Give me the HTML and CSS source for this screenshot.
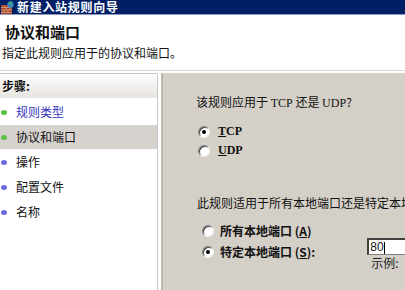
FILE: index.html
```html
<!DOCTYPE html>
<html lang="zh-CN">
<head>
  <meta charset="UTF-8" />
  <title>新建入站规则向导</title>
  <link rel="stylesheet" href="styles.css">
</head>
<body>
  <div class="titlebar">
    <svg class="app-icon" width="13" height="13" viewBox="0 0 13 13">
      <rect x="0" y="4" width="11" height="9" fill="#a0472a"/>
      <path d="M0 6.5h11M0 9h11M0 11.5h11M3 4v2.5M7 4v2.5M5 6.5v2.5M9 6.5v2.5M3 9v2.5M7 9v2.5" stroke="#e0a080" stroke-width="0.8"/>
      <circle cx="9.5" cy="3.5" r="3.2" fill="#2a7fd0"/>
      <path d="M7.6 2.2c1 .2 1.4 1 2.2 1.2.6.2.6 1.3 1.4 1.6M9 .5c.3 .8 1.2 1 1.8 .8" stroke="#5cc040" stroke-width="1.1" fill="none"/>
    </svg>
    <span class="title-text">新建入站规则向导</span>
  </div>

  <div class="page-head">
    <h1>协议和端口</h1>
    <p>指定此规则应用于的协议和端口。</p>
  </div>

  <div class="main">
    <div class="steps">
      <div class="steps-head">步骤:</div>
      <ul class="step-list">
        <li class="done"><span class="dot green"></span><a>规则类型</a></li>
        <li class="current"><span class="dot green"></span>协议和端口</li>
        <li><span class="dot"></span>操作</li>
        <li><span class="dot"></span>配置文件</li>
        <li><span class="dot"></span>名称</li>
      </ul>
    </div>

    <div class="content">
      <p class="question">该规则应用于 <span class="mono">TCP</span> 还是 <span class="mono">UDP</span>?</p>
      <label class="radio"><span class="rb checked"></span><b class="mono"><u>T</u>CP</b></label>
      <label class="radio"><span class="rb"></span><b class="mono"><u>U</u>DP</b></label>

      <p class="question second">此规则适用于所有本地端口还是特定本地端口?</p>
      <label class="radio port"><span class="rb"></span><b>所有本地端口 (<u>A</u>)</b></label>
      <div class="port-row">
        <label class="radio port"><span class="rb checked"></span><b>特定本地端口 (<u>S</u>):</b></label>
        <div class="port-box">
          <div class="textbox">80<span class="caret"></span></div>
          <div class="example">示例:</div>
        </div>
      </div>
    </div>
  </div>
</body>
</html>
```

FILE: styles.css
```css
body { margin: 0; width: 405px; height: 290px; overflow: hidden; background: #fff; font-family: "Noto Sans CJK SC", "DejaVu Sans", sans-serif; font-size: 12px; color: #111; }

.titlebar { height: 14px; background: #011f66; border-bottom: 1px solid #8d9bc4; display: flex; align-items: center; gap: 3px; padding-left: 1px; overflow: hidden; }
.app-icon { flex: none; }
.title-text { color: #fff; font-weight: bold; font-size: 12px; letter-spacing: 0.7px; line-height: 14px; }

.page-head { height: 55px; border-bottom: 1px solid #d8d8d8; }
.page-head h1 { margin: 0; padding: 8px 0 0 5px; font-size: 15px; line-height: 18px; font-weight: bold; }
.page-head p { margin: 0; padding: 4px 0 0 2px; font-size: 12px; line-height: 16px; }

.main { display: flex; height: 219px; padding-top: 2px; }

.steps { width: 157px; border: 1px solid #c8c8c8; border-left: none; background: #fff; }
.steps-head { height: 24px; line-height: 24px; padding-left: 2px; font-weight: bold; background: linear-gradient(#ffffff, #e6e3df); }
.step-list { list-style: none; margin: 0; padding: 2px 0 0; }
.step-list li { height: 24px; line-height: 24px; display: flex; align-items: center; gap: 9px; margin-bottom: 1px; }
.step-list li.current { background: #d6d3ce; }
.step-list a { color: #3333bb; }
.dot { width: 6px; height: 5px; border-radius: 50%; background: #6a6ad8; margin-left: 1px; }
.dot.green { background: #58c040; }

.content { flex: 1; margin-left: 3px; border-left: 2px solid #bbb8b0; background: #d4d0c8; padding: 21px 0 0 33px; white-space: nowrap; overflow: hidden; }
.question { margin: 0 0 11px; line-height: 16px; }
.question.second { margin: 35px 0 9px 1px; }
.mono { font-family: "Liberation Serif", serif; }
.radio { display: flex; align-items: center; gap: 8px; height: 19px; padding-left: 2px; }
.radio b { font-weight: bold; }
.radio.port { padding-left: 6px; gap: 6px; height: 21px; }
.rb { width: 10px; height: 10px; border-radius: 50%; background: #fff; border: 1px solid #808080; border-right-color: #eee; border-bottom-color: #eee; box-shadow: inset 1px 1px 0 #404040; position: relative; }
.rb.checked::after { content: ""; position: absolute; left: 3px; top: 3px; width: 4px; height: 4px; border-radius: 50%; background: #000; }

.port-row { display: flex; align-items: flex-start; }
.port-box { margin-left: 52px; margin-top: -3px; }
.textbox { width: 40px; height: 14px; background: #fff; border: 1px solid #808080; border-right: none; border-left: 2px solid #404040; border-top: 2px solid #404040; font-family: "Liberation Sans", sans-serif; font-size: 12px; line-height: 14px; padding-left: 1px; }
.caret { display: inline-block; width: 1px; height: 12px; background: #000; vertical-align: middle; }
.example { padding-left: 4px; line-height: 16px; color: #222; }
```
